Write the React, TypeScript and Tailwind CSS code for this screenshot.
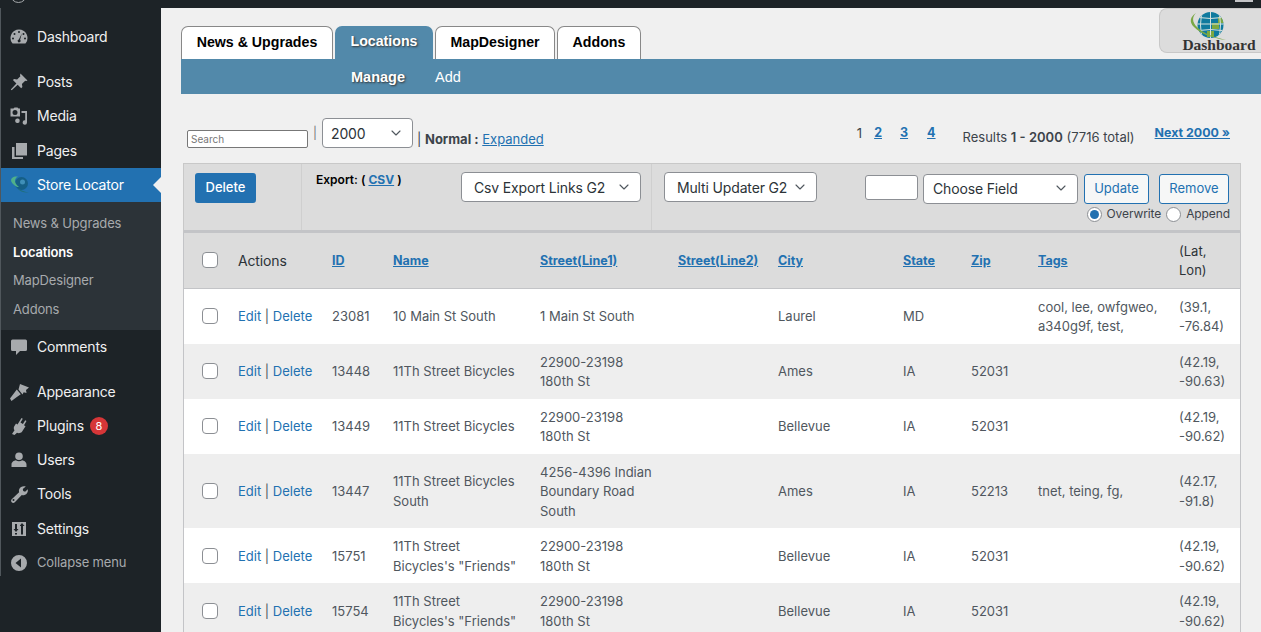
import React from 'react';
import { ChevronDown } from 'lucide-react';

const FONT = "font-['Inter','Liberation_Sans',sans-serif]";

// wp admin menu icons, drawn on a 20x20 box
const icons: Record<string, React.ReactNode> = {
  dashboard: (
    <path fillRule="evenodd" d="M10 2.500a8.500 8.500 0 0 0-7 13.300l.6.7h12.800l.6-.7A8.500 8.500 0 0 0 10 2.500zM10 4a1 1 0 1 1 0 2 1 1 0 0 1 0-2zM5.500 6a1 1 0 1 1 0 2 1 1 0 0 1 0-2zm9 0a1 1 0 1 1 0 2 1 1 0 0 1 0-2zM4 10.500a1 1 0 1 1 0 2 1 1 0 0 1 0-2zm12 0a1 1 0 1 1 0 2 1 1 0 0 1 0-2zM12.800 6.500l-1.700 6.200a1.500 1.500 0 1 1-1.300-.3z" />
  ),
  posts: <path d="M11.500 1.500l7 7-1.300.6-1-.4-3.300 3.300.5 3-1.200 1.200-3.500-3.500-6 5.600-.9-.9 5.600-6-3.500-3.500L5.100 7l3 .5 3.300-3.300-.4-1z" />,
  media: (
    <path fillRule="evenodd" d="M1.500 2.500h3l1-1h3l1 1h1.500v8H1.500zM6 4a2.500 2.500 0 1 0 0 5 2.500 2.500 0 0 0 0-5zm6.500 1H18v11.500a2.200 2.200 0 1 1-1.800-2.200V7h-3.700zM8 12.500a2.300 2.300 0 1 1-.1 4.500 2.300 2.300 0 0 1 .1-4.500z" />
  ),
  pages: <path d="M7 2h11v12.500H7zM3 6h2.500v10H14v2H3z" />,
  comments: <path d="M3.500 2.500h13A1.500 1.500 0 0 1 18 4v8.500a1.500 1.500 0 0 1-1.500 1.500H11l-4 4v-4H3.500A1.500 1.500 0 0 1 2 12.500V4a1.500 1.500 0 0 1 1.500-1.500z" />,
  appearance: <path d="M11 2l9 3.500-3 2.500.5 3-2.800-.7-1.200 2.200-4-5zM7.800 7.500l4 4.800-4.300 3L2.500 19 1 16.500z" />,
  plugins: <path d="M12.500 2l1.300.8-2.300 3.800 2.400 1.400 2.300-3.800 1.300.8-2.500 4.200 1.500 1-3.500 5.500c-1.500 1.600-3.500 1.800-5 1L5.500 19 3 18l2.500-3.700c-1-1.500-.8-3-.2-4l1.700-2.800 1.500.9z" />,
  users: <path d="M10 2.500a3.800 3.800 0 1 1 0 7.600 3.800 3.800 0 0 1 0-7.600zM2.500 17v-2.500c0-2.300 2.500-4 4.300-4.200 1.800 1.400 4.600 1.400 6.400 0 1.800.2 4.300 1.900 4.300 4.200V17z" />,
  tools: <path d="M16.800 2.600l-3 2.400.4 2 1.900.7 2.700-2.400c.5 2.600-.8 5-3.300 5.700-1 .3-1.900.2-2.700 0l-7 7.200c-.9.900-2.300.9-3.100 0-.8-.8-.8-2.200 0-3l7.400-6.900c-.3-1-.3-2 .1-3 .9-2.400 3.900-3.600 6.600-2.700zM4.500 15a1 1 0 1 0 0 2 1 1 0 0 0 0-2z" />,
  settings: (
    <path fillRule="evenodd" d="M3 3h14v14H3zM6 5v5H4.500L7 13l2.500-3H8V5zm0 9v1.500h2V14zm5-7.500L13 4l2.500 3H14v8.500h-2V7h-1z" />
  ),
  collapse: (
    <path fillRule="evenodd" d="M10 2a8 8 0 1 1 0 16 8 8 0 0 1 0-16zm2 3.500L6.500 10l5.500 4.500z" />
  ),
};

function MenuIcon({ name }: { name: string }) {
  return (
    <svg viewBox="0 0 20 20" className="w-[20px] h-[20px] fill-[#a7aaad]">
      {icons[name]}
    </svg>
  );
}

function LogoGlobe() {
  return (
    <svg viewBox="0 0 40 36" className="w-[40px] h-[36px] mr-[8px] mt-[1px] -mb-[8px]">
      <defs>
        <clipPath id="logo-clip">
          <circle cx="23.500" cy="15" r="13" />
        </clipPath>
      </defs>
      <circle cx="23.500" cy="15" r="13" fill="#0f7a9e" />
      <g clipPath="url(#logo-clip)">
        <path d="M25 13h7v6h-7zM31 7h6v6h-6zM20 21h7v6h-7z" fill="#7da83f" />
        <g stroke="#d5e2de" strokeWidth="1" fill="none">
          <path d="M6 7q17.500 3 35 0M6 14h35M6 21q17.500-3 35 0" />
          <path d="M16 0q-5 15 0 30M23.500 0v30M31 0q5 15 0 30" />
        </g>
      </g>
      <path d="M9 3C5 7 5 12 10 17c6 6 16 10 29 13-14-2-25-6-32-13C2 12 3 7 9 3z" fill="#7aa845" />
    </svg>
  );
}

function MenuGlobe() {
  return (
    <svg viewBox="0 0 22 20" className="w-[22px] h-[20px]">
      <circle cx="12.500" cy="8.500" r="6.500" fill="#155f86" />
      <circle cx="13.500" cy="7" r="2.500" fill="#3f8fb8" />
      <path d="M6 1.500C1.500 2.500 1 6 4 9c2.500 2.500 4 3 6 3C7.500 10 6 8 6 6c0-2 1-3.500 3-4.500z" fill="#4fb08a" />
      <path d="M8 13c4 2.500 8 4 12 4.500-5 .5-9-1-12-4.500z" fill="#1f6f77" />
    </svg>
  );
}

function Row({ icon, label, badge, top, tall }: { icon: string; label: string; badge?: string; top?: boolean; tall?: boolean }) {
  return (
    <div className={`${tall ? 'h-[35px]' : 'h-[34px]'} flex items-center pl-[8px] text-[14px] tracking-[-0.2px] text-[#f0f0f1] ${top ? 'mt-[11px]' : ''}`}>
      <MenuIcon name={icon} />
      <span className={`ml-[8px] ${tall ? 'mb-[1px]' : 'mb-[2px]'}`}>{label}</span>
      {badge && (
        <span className="ml-[6px] w-[18px] h-[18px] rounded-full bg-[#d63638] text-white text-[11px] flex items-center justify-center">
          {badge}
        </span>
      )}
    </div>
  );
}

function Sidebar() {
  return (
    <aside className="w-[161px] shrink-0 bg-[#1d2327]">
      <div className="h-[568px] border-l border-[#50575c] pt-[12px]">
        <Row icon="dashboard" label="Dashboard" />
        <Row icon="posts" label="Posts" top />
        <Row icon="media" label="Media" />
        <Row icon="pages" label="Pages" tall />
        <div className="relative h-[34px] bg-[#2271b1] flex items-center pl-[8px] text-[14px] tracking-[-0.2px] text-white">
          <MenuGlobe />
          <span className="ml-[6px] mb-[2px]">Store Locator</span>
          <span className="absolute right-0 top-[9px] border-y-[8px] border-r-[8px] border-y-transparent border-r-[#f0f0f0]" />
        </div>
        <div className="bg-[#2c3338] h-[128px] pl-[12px] pt-[7px] text-[13px] tracking-[-0.15px] leading-[28.500px] text-[#a7aaad]">
          <div>News &amp; Upgrades</div>
          <div className="font-semibold text-white">Locations</div>
          <div>MapDesigner</div>
          <div>Addons</div>
        </div>
        <Row icon="comments" label="Comments" />
        <Row icon="appearance" label="Appearance" top />
        <Row icon="plugins" label="Plugins" badge="8" />
        <Row icon="users" label="Users" />
        <Row icon="tools" label="Tools" />
        <Row icon="settings" label="Settings" tall />
        <div className="h-[34px] flex items-center pl-[8px] text-[13px] tracking-[-0.15px] text-[#a7aaad]">
          <MenuIcon name="collapse" />
          <span className="ml-[8px]">Collapse menu</span>
        </div>
      </div>
    </aside>
  );
}

function Tab({ label, width, active }: { label: string; width: string; active?: boolean }) {
  return (
    <div
      className={`h-[33px] ${width} pb-[1px] flex items-center justify-center rounded-t-[7px] font-['Liberation_Sans',sans-serif] font-bold text-[14.200px] ${
        active
          ? 'bg-[#5289aa] text-white [text-shadow:1px_1px_2px_#333]'
          : 'bg-white text-black border border-b-0 border-[#888]'
      }`}
    >
      {label}
    </div>
  );
}

function Select({ label, className }: { label: string; className: string }) {
  return (
    <div className={`h-[30px] pr-[12px] bg-white border border-[#8c8f94] rounded-[4px] flex items-center justify-between text-[14px] tracking-[-0.15px] text-[#2c3338] ${className}`}>
      <span>{label}</span>
      <ChevronDown size={16} strokeWidth={1.700} className="text-[#50575e] -mr-[4px]" />
    </div>
  );
}

function Check() {
  return <span className="block w-[16px] h-[16px] bg-white border border-[#8c8f94] rounded-[4px]" />;
}

type Loc = { id: string; name: string; s1: string; city: string; state: string; zip: string; tags: string; lat: string; lon: string };

const rows: Loc[] = [
  { id: '23081', name: '10 Main St South', s1: '1 Main St South', city: 'Laurel', state: 'MD', zip: '', tags: 'cool, lee, owfgweo, a340g9f, test,', lat: '(39.1,', lon: '-76.84)' },
  { id: '13448', name: '11Th Street Bicycles', s1: '22900-23198 180th St', city: 'Ames', state: 'IA', zip: '52031', tags: '', lat: '(42.19,', lon: '-90.63)' },
  { id: '13449', name: '11Th Street Bicycles', s1: '22900-23198 180th St', city: 'Bellevue', state: 'IA', zip: '52031', tags: '', lat: '(42.19,', lon: '-90.62)' },
  { id: '13447', name: '11Th Street Bicycles South', s1: '4256-4396 Indian Boundary Road South', city: 'Ames', state: 'IA', zip: '52213', tags: 'tnet, teing, fg,', lat: '(42.17,', lon: '-91.8)' },
  { id: '15751', name: '11Th Street Bicycles\'s "Friends"', s1: '22900-23198 180th St', city: 'Bellevue', state: 'IA', zip: '52031', tags: '', lat: '(42.19,', lon: '-90.62)' },
  { id: '15754', name: '11Th Street Bicycles\'s "Friends"', s1: '22900-23198 180th St', city: 'Bellevue', state: 'IA', zip: '52031', tags: '', lat: '(42.19,', lon: '-90.62)' },
];

const headers = ['ID', 'Name', 'Street(Line1)', 'Street(Line2)', 'City', 'State', 'Zip', 'Tags'];
const link = 'text-[#2271b1] underline';
const cell = 'pl-[10px] pt-[9px] pb-[7px]';

function LocationsTable() {
  return (
    <div className="w-[1058px] border-x border-[#c3c4c7]">
      <table className="table-fixed border-collapse w-full text-[13px] leading-[19.500px] text-[#50575e]">
        <colgroup>
          <col className="w-[44px]" />
          <col className="w-[94px]" />
          <col className="w-[61px]" />
          <col className="w-[147px]" />
          <col className="w-[138px]" />
          <col className="w-[100px]" />
          <col className="w-[125px]" />
          <col className="w-[68px]" />
          <col className="w-[67px]" />
          <col className="w-[141px]" />
          <col className="w-[71px]" />
        </colgroup>
        <thead>
          <tr className="h-[55px] bg-[#dcdcdc] border-b border-[#c3c4c7] text-left">
            <th className="pl-[18px] font-normal"><Check /></th>
            <th className="pl-[10px] font-normal text-[14px] tracking-[-0.15px] text-[#2c3338]">Actions</th>
            {headers.map((h) => (
              <th key={h} className={`pl-[10px] font-bold text-[12.500px] ${link}`}>{h}</th>
            ))}
            <th className="pl-[10px] pt-[2px] font-normal text-[#2c3338]">(Lat,<br />Lon)</th>
          </tr>
        </thead>
        <tbody>
          {rows.map((r, i) => (
            <tr key={r.id} className={i % 2 === 0 ? 'bg-white' : 'bg-[#eeeeee]'}>
              <td className="pl-[18px] py-[8px]"><Check /></td>
              <td className={cell}>
                <span className="text-[#2271b1]">Edit</span> | <span className="text-[#2271b1]">Delete</span>
              </td>
              <td className={cell}>{r.id}</td>
              <td className={`${cell} pr-[8px]`}>{r.name}</td>
              <td className={`${cell} pr-[8px]`}>{r.s1}</td>
              <td />
              <td className={cell}>{r.city}</td>
              <td className={cell}>{r.state}</td>
              <td className={cell}>{r.zip}</td>
              <td className={`${cell} pr-[8px]`}>{r.tags}</td>
              <td className={cell}>{r.lat}<br />{r.lon}</td>
            </tr>
          ))}
        </tbody>
      </table>
    </div>
  );
}

function Toolbar() {
  return (
    <div className="w-[1058px] h-[70px] bg-[#dcdcdc] border border-[#c8c8c8] border-b-[3px] border-b-[#c3c4c7] flex text-[#2c3338]">
      <div className="w-[118px] pl-[11px] pt-[9px] border-r border-[#cfcfcf]">
        <div className="w-[61px] h-[30px] bg-[#2271b1] rounded-[3px] text-white text-[13px] font-medium flex items-center justify-center">Delete</div>
      </div>
      <div className="w-[350px] pl-[14px] pt-[8px] border-r border-[#cfcfcf] flex">
        <div className="w-[145px] -mt-[1px] text-[12px] font-semibold text-black">
          Export: ( <span className={`${link} font-bold`}>CSV</span> )
        </div>
        <Select label="Csv Export Links G2" className="w-[180px] pl-[12px]" />
      </div>
      <div className="pl-[12px] pt-[8px]">
        <Select label="Multi Updater G2" className="w-[153px] pl-[12px]" />
      </div>
      <div className="ml-[48px] pt-[10px]">
        <div className="flex gap-[5px]">
          <div className="w-[53px] h-[25px] mt-[1px] bg-white border border-[#8c8f94] rounded-[3px]" />
          <Select label="Choose Field" className="w-[155px] pl-[9px] pb-[2px]" />
          <div className="w-[65px] h-[30px] ml-[1px] border border-[#2271b1] rounded-[3px] bg-[#f6f7f7] text-[#2271b1] text-[13px] flex items-center justify-center">Update</div>
          <div className="w-[70px] h-[30px] ml-[5px] border border-[#2271b1] rounded-[3px] bg-[#f6f7f7] text-[#2271b1] text-[13px] flex items-center justify-center">Remove</div>
        </div>
        <div className="flex items-center justify-end mt-[1px] text-[12px] tracking-[-0.1px] text-[#3c434a] -mr-[1px]">
          <span className="w-[15px] h-[15px] rounded-full bg-white border border-[#8c8f94] flex items-center justify-center mr-[5px]">
            <span className="w-[9px] h-[9px] rounded-full bg-[#2271b1]" />
          </span>
          Overwrite
          <span className="w-[15px] h-[15px] rounded-full bg-white border border-[#8c8f94] mx-[5px]" />
          Append
        </div>
      </div>
    </div>
  );
}

export default function App() {
  return (
    <div className={`h-[632px] w-[1261px] overflow-hidden bg-[#f0f0f0] ${FONT}`}>
      <div className="h-[8px] bg-[#1d2327] overflow-hidden flex justify-between pl-[10px] pr-[8px]">
        <span className="w-[17px] h-[17px] -mt-[14px] rounded-full border border-[#a7aaad]" />
        <span className="w-[18px] h-[2px] bg-[#c3c4c7]" />
      </div>
      <div className="flex h-[624px]">
        <Sidebar />
        <main className="flex-1 min-w-0 relative">
          <div className="absolute right-0 top-0 w-[102px] h-[45px] bg-[#dcdcdc] border border-r-0 border-[#c8c8c8] rounded-l-[8px] flex flex-col items-center">
            <LogoGlobe />
            <span className="font-['Liberation_Serif',serif] font-bold text-[15.500px] leading-[14px] text-[#333] ml-[17px]">Dashboard</span>
          </div>
          <div className="pl-[20px] pt-[18px] flex gap-[2px]">
            <Tab label="News & Upgrades" width="w-[152px]" />
            <Tab label="Locations" width="w-[98px]" active />
            <Tab label="MapDesigner" width="w-[120px]" />
            <Tab label="Addons" width="w-[84px]" />
          </div>
          <div className="ml-[20px] h-[35px] bg-[#5289aa] pl-[170px] pt-[2px] flex items-center gap-[30px] font-['Liberation_Sans',sans-serif] text-[14.500px] text-white">
            <span className="font-bold [text-shadow:1px_1px_2px_#333]">Manage</span>
            <span>Add</span>
          </div>
          <div className="h-[69px] ml-[26px] mr-[31px] pt-[24px] flex items-start text-[#3c434a]">
            <div className="mt-[12px] w-[121px] h-[18px] bg-white border border-[#777] rounded-[2px] px-[3px] text-[10px] leading-[16px] text-[#777]">Search</div>
            <span className="ml-[5px] mt-[6px] text-[12px] text-[#777]">|</span>
            <Select label="2000" className="ml-[5px] w-[91px] pl-[8px]" />
            <div className="ml-[4px] mt-[12px] text-[13px]">
              | <span className="font-bold">Normal :</span> <span className={link}>Expanded</span>
            </div>
            <div className="ml-auto flex mt-[6px] text-[13px]">
              <span>1</span>
              <span className={`${link} ml-[12px] font-bold text-[12.500px]`}>2</span>
              <span className={`${link} ml-[18px] font-bold text-[12.500px]`}>3</span>
              <span className={`${link} ml-[19px] font-bold text-[12.500px]`}>4</span>
              <span className="ml-[27px] mt-[4px]">Results <b className="font-semibold">1 - 2000</b> (7716 total)</span>
              <span className={`${link} ml-[20px] font-bold text-[12.400px]`}>Next 2000 »</span>
            </div>
          </div>
          <div className="ml-[22px]">
            <Toolbar />
            <LocationsTable />
          </div>
        </main>
      </div>
    </div>
  );
}
